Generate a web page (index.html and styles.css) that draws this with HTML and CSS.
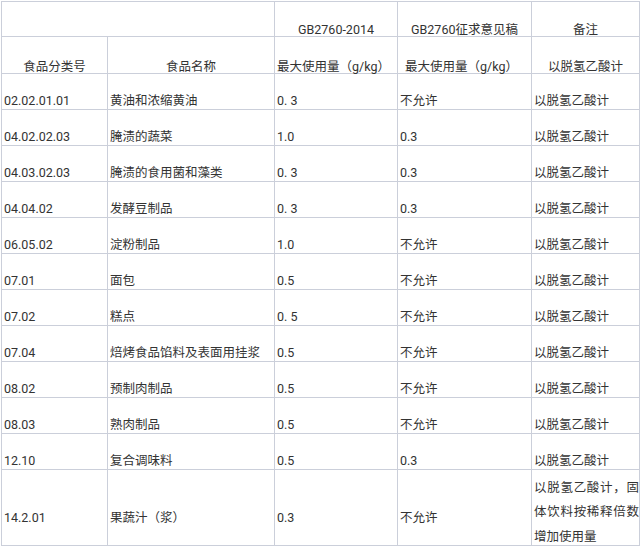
FILE: index.html
```html
<!DOCTYPE html>
<html lang="zh">
<head>
<meta charset="utf-8">
<title>脱氢乙酸使用量对比</title>
<link rel="stylesheet" href="styles.css">
</head>
<body>
<table class="grid">
  <colgroup>
    <col class="c1"><col class="c2"><col class="c3"><col class="c4"><col class="c5">
  </colgroup>
  <tr class="head1">
    <td colspan="2"></td>
    <td class="center">GB2760-2014</td>
    <td class="center">GB2760征求意见稿</td>
    <td class="center">备注</td>
  </tr>
  <tr class="head2">
    <td class="center">食品分类号</td>
    <td class="center">食品名称</td>
    <td>最大使用量（g/kg）</td>
    <td class="pad4">最大使用量（g/kg）</td>
    <td class="center">以脱氢乙酸计</td>
  </tr>
  <tr><td>02.02.01.01</td><td>黄油和浓缩黄油</td><td>0. 3</td><td>不允许</td><td>以脱氢乙酸计</td></tr>
  <tr><td>04.02.02.03</td><td>腌渍的蔬菜</td><td>1.0</td><td>0.3</td><td>以脱氢乙酸计</td></tr>
  <tr><td>04.03.02.03</td><td>腌渍的食用菌和藻类</td><td>0. 3</td><td>0.3</td><td>以脱氢乙酸计</td></tr>
  <tr><td>04.04.02</td><td>发酵豆制品</td><td>0. 3</td><td>0.3</td><td>以脱氢乙酸计</td></tr>
  <tr><td>06.05.02</td><td>淀粉制品</td><td>1.0</td><td>不允许</td><td>以脱氢乙酸计</td></tr>
  <tr><td>07.01</td><td>面包</td><td>0.5</td><td>不允许</td><td>以脱氢乙酸计</td></tr>
  <tr><td>07.02</td><td>糕点</td><td>0. 5</td><td>不允许</td><td>以脱氢乙酸计</td></tr>
  <tr><td>07.04</td><td>焙烤食品馅料及表面用挂浆</td><td>0.5</td><td>不允许</td><td>以脱氢乙酸计</td></tr>
  <tr><td>08.02</td><td>预制肉制品</td><td>0.5</td><td>不允许</td><td>以脱氢乙酸计</td></tr>
  <tr><td>08.03</td><td>熟肉制品</td><td>0.5</td><td>不允许</td><td>以脱氢乙酸计</td></tr>
  <tr><td>12.10</td><td>复合调味料</td><td>0.5</td><td>0.3</td><td>以脱氢乙酸计</td></tr>
  <tr class="last">
    <td>14.2.01</td><td>果蔬汁（浆）</td><td>0.3</td><td>不允许</td>
    <td class="note"><div class="note-text">以脱氢乙酸计，固体饮料按稀释倍数增加使用量</div></td>
  </tr>
</table>
</body>
</html>
```
FILE: styles.css
```css
html, body {
  margin: 0;
  padding: 0;
  background: #ffffff;
}

body {
  font-family: Roboto, "Noto Sans CJK SC", "DejaVu Sans", sans-serif;
  font-size: 12.5px;
  color: #333333;
}

.grid {
  border-collapse: collapse;
  table-layout: fixed;
  width: 638px;
  margin: 1px 0 0 1px;
}

.c1 { width: 106px; }
.c2 { width: 167px; }
.c3 { width: 123px; }
.c4 { width: 134px; }
.c5 { width: 108px; }

.grid td {
  border: 1px solid #cbcfda;
  padding: 0 0 0 2px;
  line-height: 16px;
  vertical-align: bottom;
  white-space: nowrap;
  height: 36px;
  box-sizing: border-box;
}

.grid tr.head1 td { height: 35px; line-height: 12px; }
.grid tr.head2 td { height: 37px; line-height: 12px; }

.grid td.center {
  text-align: center;
  padding-left: 0;
}

.grid td.pad4 { padding-left: 7px; }

.grid tr.last td {
  height: 76px;
  vertical-align: middle;
  padding-top: 20px;
}

.grid tr.last td.note {
  vertical-align: bottom;
  padding-top: 0;
  white-space: normal;
}

.note-text {
  line-height: 24.5px;
  margin-bottom: -4px;
  text-align: justify;
  text-justify: inter-character;
}
```
